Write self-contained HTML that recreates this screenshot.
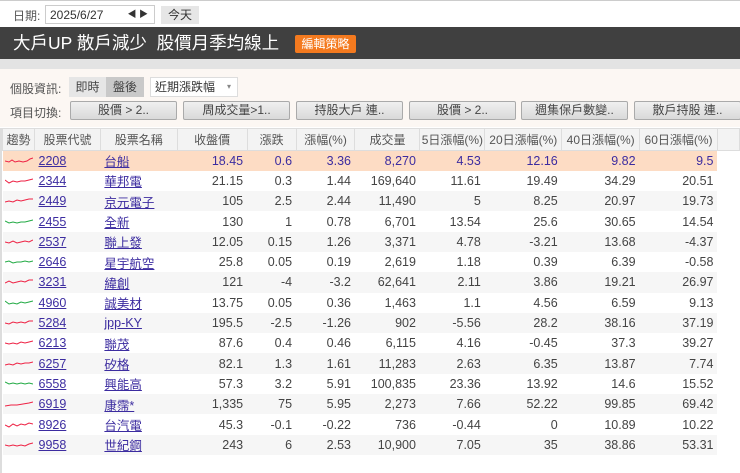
<!DOCTYPE html>
<html><head><meta charset="utf-8"><style>
*{box-sizing:border-box;margin:0;padding:0}
body{width:740px;height:473px;background:#fff;font-family:"Liberation Sans","Noto Sans CJK TC",sans-serif;font-size:12px;color:#333;position:relative;overflow:hidden}
.top{position:absolute;left:0;top:0;width:740px;height:27px;background:#fff;border-top:1px solid #ccc}
.top .lbl{position:absolute;left:13px;top:6px;color:#555}
.date{position:absolute;left:45px;top:4px;width:110px;height:19px;border:1px solid #ccc;padding:2px 4px;font-size:12px}
.date .ar{position:absolute;right:6px;top:1px;font-size:9px}
.today{position:absolute;left:161px;top:5px;width:38px;height:18px;background:#e6e6e6;text-align:center;line-height:18px}
.title{position:absolute;left:0;top:27px;width:740px;height:32px;background:#404040;color:#fff;font-size:17.5px;line-height:32px;padding-left:13px;white-space:nowrap}
.edit{position:absolute;left:295px;top:35px;width:61px;height:18px;background:#f47a1f;color:#fff;font-size:12px;text-align:center;line-height:18px;border-radius:2px}
.strip{position:absolute;left:0;top:59px;width:740px;height:10px;background:#e3e3e3}
.area{position:absolute;left:0;top:69px;width:740px;height:58px;background:#fcf7f3}
.l{position:absolute;color:#555}
.seg{position:absolute;top:77px;height:20px;line-height:20px;text-align:center;background:#e6e6e6;color:#444}
.sel{position:absolute;left:150px;top:77px;width:88px;height:20px;background:#fff;border:1px solid #ddd;padding-left:4px;line-height:18px}
.btn{position:absolute;top:101px;width:107px;height:19px;border:1px solid #aaa;border-radius:2px;background:linear-gradient(#f0f0f0,#d9d9d9);text-align:center;line-height:17px;color:#444}
table{position:absolute;left:2px;top:128px;border-collapse:collapse;font-size:12.5px}
th{height:22px;font-weight:normal;color:#555;background:#f3f3f3;border:1px solid #ddd;font-size:12px}
td{height:20.3px;padding:0 4px;text-align:right;color:#444}
tr:nth-child(even) td{background:#f6f6f6}
tr.h td{background:#fddcc4!important;color:#3c2ca0}
td.c,td.n{text-align:left;padding-left:4px}
td a{color:#3c2ca0;text-decoration:underline}
td.s{padding:0 2px}
</style></head><body>
<div class="top"><span class="lbl">日期:</span><div class="date">2025/6/27<span class="ar">◀ ▶</span></div><div class="today">今天</div></div>
<div class="title">大戶UP 散戶減少&nbsp; 股價月季均線上</div>
<div class="edit">編輯策略</div>
<div class="strip"></div>
<div class="area"></div>
<div class="l" style="left:10px;top:80px">個股資訊:</div>
<div class="seg" style="left:69px;width:37px">即時</div>
<div class="seg" style="left:106px;width:38px;background:#c9c9c9">盤後</div>
<div class="sel">近期漲跌幅<span style="position:absolute;right:6px;font-size:8px;color:#888">▾</span></div>
<div class="l" style="left:10px;top:104px">項目切換:</div>
<div class="btn" style="left:70px">股價 &gt; 2..</div>
<div class="btn" style="left:183px">周成交量&gt;1..</div>
<div class="btn" style="left:296px">持股大戶 連..</div>
<div class="btn" style="left:409px">股價 &gt; 2..</div>
<div class="btn" style="left:521px">週集保戶數變..</div>
<div class="btn" style="left:634px">散戶持股 連..</div>
<table>
<tr><th style="width:32px">趨勢</th><th style="width:66px">股票代號</th><th style="width:77px">股票名稱</th><th style="width:70px">收盤價</th><th style="width:49px">漲跌</th><th style="width:59px">漲幅(%)</th><th style="width:65px">成交量</th><th style="width:65px">5日漲幅(%)</th><th style="width:77px">20日漲幅(%)</th><th style="width:78px">40日漲幅(%)</th><th style="width:78px">60日漲幅(%)</th><th style="width:22px;background:#f3f3f3"></th></tr>
<tr class="h"><td class="s"><svg width="28" height="8"><polyline points="0,4 4,5 7,3 10,5 14,4 18,5 22,4 25,2 28,1" fill="none" stroke="#e24" stroke-width="1"/></svg></td><td class="c"><a>2208</a></td><td class="n"><a>台船</a></td><td>18.45</td><td>0.6</td><td>3.36</td><td>8,270</td><td>4.53</td><td>12.16</td><td>9.82</td><td>9.5</td><td style="background:#fff!important"></td></tr>
<tr><td class="s"><svg width="28" height="8"><polyline points="0,3 4,6 8,4 12,5 16,4 20,4 24,3 28,2" fill="none" stroke="#e24"/></svg></td><td class="c"><a>2344</a></td><td class="n"><a>華邦電</a></td><td>21.15</td><td>0.3</td><td>1.44</td><td>169,640</td><td>11.61</td><td>19.49</td><td>34.29</td><td>20.51</td><td style="background:#fff"></td></tr>
<tr><td class="s"><svg width="28" height="8"><polyline points="0,5 4,4 8,5 12,3 16,4 20,3 24,2 28,2" fill="none" stroke="#e24"/></svg></td><td class="c"><a>2449</a></td><td class="n"><a>京元電子</a></td><td>105</td><td>2.5</td><td>2.44</td><td>11,490</td><td>5</td><td>8.25</td><td>20.97</td><td>19.73</td><td style="background:#fff"></td></tr>
<tr><td class="s"><svg width="28" height="8"><polyline points="0,3 4,5 8,4 12,5 16,4 20,4 24,3 28,2" fill="none" stroke="#2a4"/></svg></td><td class="c"><a>2455</a></td><td class="n"><a>全新</a></td><td>130</td><td>1</td><td>0.78</td><td>6,701</td><td>13.54</td><td>25.6</td><td>30.65</td><td>14.54</td><td style="background:#fff"></td></tr>
<tr><td class="s"><svg width="28" height="8"><polyline points="0,4 4,5 8,3 12,5 16,4 20,3 24,4 28,2" fill="none" stroke="#e24"/></svg></td><td class="c"><a>2537</a></td><td class="n"><a>聯上發</a></td><td>12.05</td><td>0.15</td><td>1.26</td><td>3,371</td><td>4.78</td><td>-3.21</td><td>13.68</td><td>-4.37</td><td style="background:#fff"></td></tr>
<tr><td class="s"><svg width="28" height="8"><polyline points="0,4 4,3 8,5 12,4 16,4 20,3 24,4 28,3" fill="none" stroke="#2a4"/></svg></td><td class="c"><a>2646</a></td><td class="n"><a>星宇航空</a></td><td>25.8</td><td>0.05</td><td>0.19</td><td>2,619</td><td>1.18</td><td>0.39</td><td>6.39</td><td>-0.58</td><td style="background:#fff"></td></tr>
<tr><td class="s"><svg width="28" height="8"><polyline points="0,5 4,3 8,5 12,4 16,3 20,4 24,2 28,2" fill="none" stroke="#e24"/></svg></td><td class="c"><a>3231</a></td><td class="n"><a>緯創</a></td><td>121</td><td>-4</td><td>-3.2</td><td>62,641</td><td>2.11</td><td>3.86</td><td>19.21</td><td>26.97</td><td style="background:#fff"></td></tr>
<tr><td class="s"><svg width="28" height="8"><polyline points="0,2 4,5 8,4 12,5 16,3 20,4 24,3 28,2" fill="none" stroke="#2a4"/></svg></td><td class="c"><a>4960</a></td><td class="n"><a>誠美材</a></td><td>13.75</td><td>0.05</td><td>0.36</td><td>1,463</td><td>1.1</td><td>4.56</td><td>6.59</td><td>9.13</td><td style="background:#fff"></td></tr>
<tr><td class="s"><svg width="28" height="8"><polyline points="0,4 4,5 8,3 12,4 16,3 20,4 24,2 28,2" fill="none" stroke="#e24"/></svg></td><td class="c"><a>5284</a></td><td class="n"><a>jpp-KY</a></td><td>195.5</td><td>-2.5</td><td>-1.26</td><td>902</td><td>-5.56</td><td>28.2</td><td>38.16</td><td>37.19</td><td style="background:#fff"></td></tr>
<tr><td class="s"><svg width="28" height="8"><polyline points="0,4 4,5 8,4 12,5 16,3 20,4 24,3 28,2" fill="none" stroke="#e24"/></svg></td><td class="c"><a>6213</a></td><td class="n"><a>聯茂</a></td><td>87.6</td><td>0.4</td><td>0.46</td><td>6,115</td><td>4.16</td><td>-0.45</td><td>37.3</td><td>39.27</td><td style="background:#fff"></td></tr>
<tr><td class="s"><svg width="28" height="8"><polyline points="0,5 4,4 8,5 12,3 16,4 20,3 24,3 28,2" fill="none" stroke="#e24"/></svg></td><td class="c"><a>6257</a></td><td class="n"><a>矽格</a></td><td>82.1</td><td>1.3</td><td>1.61</td><td>11,283</td><td>2.63</td><td>6.35</td><td>13.87</td><td>7.74</td><td style="background:#fff"></td></tr>
<tr><td class="s"><svg width="28" height="8"><polyline points="0,2 4,4 8,3 12,4 16,3 20,4 24,3 28,4" fill="none" stroke="#2a4"/></svg></td><td class="c"><a>6558</a></td><td class="n"><a>興能高</a></td><td>57.3</td><td>3.2</td><td>5.91</td><td>100,835</td><td>23.36</td><td>13.92</td><td>14.6</td><td>15.52</td><td style="background:#fff"></td></tr>
<tr><td class="s"><svg width="28" height="8"><polyline points="0,6 6,5 12,5 18,4 24,3 28,2" fill="none" stroke="#e24"/></svg></td><td class="c"><a>6919</a></td><td class="n"><a>康霈*</a></td><td>1,335</td><td>75</td><td>5.95</td><td>2,273</td><td>7.66</td><td>52.22</td><td>99.85</td><td>69.42</td><td style="background:#fff"></td></tr>
<tr><td class="s"><svg width="28" height="8"><polyline points="0,4 4,6 8,3 12,5 16,3 20,4 24,2 28,3" fill="none" stroke="#e24"/></svg></td><td class="c"><a>8926</a></td><td class="n"><a>台汽電</a></td><td>45.3</td><td>-0.1</td><td>-0.22</td><td>736</td><td>-0.44</td><td>0</td><td>10.89</td><td>10.22</td><td style="background:#fff"></td></tr>
<tr><td class="s"><svg width="28" height="8"><polyline points="0,4 4,5 8,4 12,5 16,4 20,5 24,3 28,2" fill="none" stroke="#e24"/></svg></td><td class="c"><a>9958</a></td><td class="n"><a>世紀鋼</a></td><td>243</td><td>6</td><td>2.53</td><td>10,900</td><td>7.05</td><td>35</td><td>38.86</td><td>53.31</td><td style="background:#fff"></td></tr>
</table>
<div style="position:absolute;left:0;top:128px;width:2px;height:345px;background:#ddd"></div>
</body></html>
